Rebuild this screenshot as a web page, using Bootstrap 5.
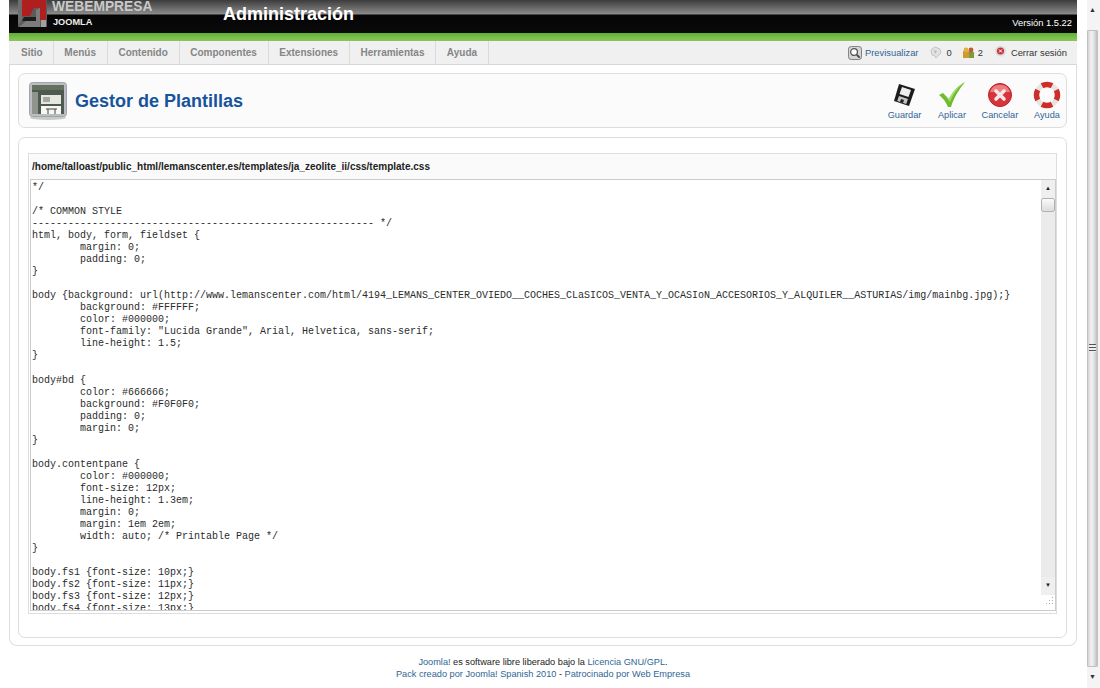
<!DOCTYPE html>
<html lang="es">
<head>
<meta charset="utf-8">
<title>Gestor de Plantillas</title>
<link href="https://cdn.jsdelivr.net/npm/bootstrap@5.3.0/dist/css/bootstrap.min.css" rel="stylesheet">
<style>
html,body{height:688px;overflow:hidden;margin:0;background:#fff}
body{font-family:"Liberation Sans",Arial,sans-serif;font-size:9.35px;color:#333}
a{text-decoration:none;color:#2f6596}
.page-shell{height:688px;padding-left:9px}
.page-col{width:1068px}
.win-bar{width:13px;margin-left:10px;background:#f4f4f4}
.win-arrow{height:21px;color:#333;font-size:7px;line-height:19px;text-align:center;padding-right:2px}
.win-gap{height:9px}
.win-thumb{height:642px;width:11px;background:linear-gradient(90deg,#d4d4d4,#f2f2f2 35%,#e4e4e4 65%,#bdbdbd);border:1px solid #c0c0c0;border-radius:1px}
.win-grip{width:7px;height:8px;background:repeating-linear-gradient(#555 0,#555 1px,#eee 1px,#eee 3px)}
.top-head{height:33px;background:linear-gradient(#3c3c3c 0,#8b8b8b 14px,#050505 15px,#0a0a0a 100%);color:#fff;overflow:hidden}
.brand-area{width:214px;padding-left:9px;height:33px}
.brand-name{font-size:13.8px;font-weight:700;color:#c9c9c9;line-height:14px;margin-left:4px}
.brand-sub{font-size:9.2px;font-weight:700;color:#eee;line-height:10px;margin-top:3px;margin-left:5px}
.head-title{font-size:18px;font-weight:700;line-height:29px}
.head-ver{font-size:9.35px;padding-right:5px;padding-top:16px}
.green-strip{height:8px;background:linear-gradient(#5fae35,#7cc04a 60%,#8ac45f)}
.menu-strip{height:24px;background:#f0f0f0;border-bottom:1px solid #d8d8d8;padding-right:10px}
.menu-item{font-size:10px;font-weight:700;color:#858585;padding:0 10.7px;line-height:23px;border-right:1px solid #dadada;height:23px}
.menu-item.first-item{padding:0 10px 0 12px}
.stat-item{font-size:9.35px;color:#333;line-height:22px}
.stat-link{margin-left:3px}
.stat-ic-a{margin-left:10px}
.stat-ic-b{margin-left:10px}
.stat-ic-c{margin-left:11px;margin-top:-3px}
.stat-num{margin-left:5px}
.stat-num-b{margin-left:3px}
.stat-gap{margin-left:4px}
.outer-frame{height:581px;border:1px solid #ddd;border-top:0;border-radius:0 0 8px 8px;padding:8px 9px 0 8px}
.tool-box{height:55px;background:#fbfbfb;border:1px solid #ddd;border-radius:7px;padding:2px 1px 0 10px}
.tool-thumb{margin-top:-2px}
.tool-title{font-size:18px;font-weight:700;color:#17549b;margin-left:8px;line-height:1;margin-top:-2px}
.tool-btn{width:36px;margin-left:11.5px;font-size:9.2px;color:#2f6596;line-height:12px;text-align:center;white-space:nowrap}
.tool-btn svg{display:block;margin:0 auto 1px;overflow:visible}
.inner-frame{height:501px;margin-top:9px;border:1px solid #ddd;border-radius:7px;padding:15px 9px 0 9px}
.file-box{height:461px;border:1px solid #ddd;padding:0 0 2px 1px}
.file-path{height:25px;background:#fafafa;font-size:10px;font-weight:700;color:#222;line-height:25px;padding-left:2px}
.code-box{height:432px;border:1px solid #ccc;background:#fff}
.code-text{flex:1;margin:0;padding:2px 0 0 1px;font-family:"Liberation Mono","Courier New",monospace;font-size:10px;line-height:12.03px;color:#2b2b2b;overflow:hidden;white-space:pre;tab-size:8}
.mini-bar{width:14px;background:#fff}
.mini-arrow{height:18px;background:#efefef;font-size:6px;color:#222;text-align:center;line-height:16px}
.mini-thumb{height:14px;background:linear-gradient(#fafafa,#dcdcdc);border:1px solid #b2b2b2;border-radius:2px}
.mini-track{flex:1;background:#ebebeb}
.mini-grip{height:15px;background:#fff;padding:2px 1px 0 3px}
.foot-text{font-size:9.2px;line-height:12px;text-align:center;padding-top:10px;color:#222}
</style>
</head>
<body>
<div class="d-flex page-shell">
  <div class="page-col">
    <header class="top-head d-flex">
      <div class="brand-area d-flex">
        <svg width="30" height="28" viewBox="0 0 30 28" class="flex-shrink-0"><rect width="29" height="27" fill="#5c5c5c"/><path d="M4 0h24v20h-6V8h-6l-4 8H4z" fill="#b01f1f"/><path d="M6 17h12v4H4z" fill="#1c1c1c"/><path d="M1 27l7-6h10V10l4-2v19z" fill="#7c7c7c"/><path d="M0 0h4v20l-4 5z" fill="#6e6e6e"/><rect x="23" y="20" width="5" height="7" fill="#a0a0a0"/></svg>
        <div><div class="brand-name">WEBEMPRESA</div><div class="brand-sub">JOOMLA</div></div>
      </div>
      <div class="head-title flex-grow-1">Administración</div>
      <div class="head-ver">Versión 1.5.22</div>
    </header>
    <div class="green-strip"></div>
    <nav class="menu-strip d-flex align-items-center">
      <span class="menu-item first-item">Sitio</span><span class="menu-item">Menús</span><span class="menu-item">Contenido</span><span class="menu-item">Componentes</span><span class="menu-item">Extensiones</span><span class="menu-item">Herramientas</span><span class="menu-item">Ayuda</span>
      <div class="ms-auto d-flex align-items-center stat-item">
        <svg width="14" height="14" viewBox="0 0 15 15"><rect x=".5" y=".5" width="14" height="14" rx="3" fill="#d5d5d5" stroke="#777"/><circle cx="6.500" cy="6.500" r="3.600" fill="#fff" stroke="#555" stroke-width="1.400"/><path d="M9.500 9.500l3 3" stroke="#444" stroke-width="2"/></svg>
        <a href="#" class="stat-link">Previsualizar</a>
        <svg width="13" height="13" viewBox="0 0 13 13" class="stat-ic-a"><path d="M2 4l4-3 5 2 1 4-3 3-2 2-1-2-3-1z" fill="#e2e2e2" stroke="#c4c4c4"/><path d="M5 4l3 1-2 3z" fill="#bbb"/></svg>
        <span class="stat-num">0</span>
        <svg width="13" height="12" viewBox="0 0 13 12" class="stat-ic-b"><rect x="1" y="4" width="6" height="7" fill="#cf9b2e"/><rect x="7" y="5" width="5" height="6" fill="#7d9b3a"/><circle cx="4" cy="3" r="2.400" fill="#e0b040"/><circle cx="9" cy="3" r="2.400" fill="#c05a30"/></svg>
        <span class="stat-num-b">2</span>
        <svg width="13" height="13" viewBox="0 0 13 13" class="stat-ic-c"><circle cx="6.500" cy="6" r="5.500" fill="#ddd"/><circle cx="6.500" cy="6" r="3.600" fill="#c9333a"/><path d="M5 4.500l3 3M8 4.500l-3 3" stroke="#fff"/></svg>
        <span class="stat-gap">Cerrar sesión</span>
      </div>
    </nav>
    <div class="outer-frame">
      <div class="tool-box d-flex align-items-center">
        <svg width="38" height="38" viewBox="0 0 38 38" class="flex-shrink-0 tool-thumb"><ellipse cx="19" cy="35.500" rx="18" ry="2.500" fill="#c9c9c9"/><rect x=".5" y=".5" width="37" height="34" rx="3" fill="#b9bec4" stroke="#a4a4a4"/><rect x="3" y="3" width="32" height="29" fill="#4e5a4f"/><rect x="3" y="3" width="32" height="5" fill="#65715f"/><rect x="3" y="10" width="6" height="22" fill="#8f958c"/><rect x="12" y="13" width="20" height="9" fill="#e7e7e2"/><rect x="14" y="15" width="7" height="5" fill="#a6a99f"/><rect x="12" y="24" width="20" height="8" fill="#f6f6f3"/><path d="M17 27h11M19 27v5M26 27v5" stroke="#444"/></svg>
        <h1 class="tool-title mb-0 flex-grow-1">Gestor de Plantillas</h1>
        <a href="#" class="tool-btn"><svg width="26" height="26" viewBox="0 0 26 26"><path d="M7 2l16 5-6 17L2 19z" fill="#1c1c1c"/><path d="M10 5l9 3-2.500 7-9-3z" fill="#eee"/><path d="M7 14l9 3-1.800 5-9-3z" fill="#c4c4c4"/><path d="M9 17l3 1-1 3-3-1z" fill="#222"/></svg>Guardar</a>
        <a href="#" class="tool-btn"><svg width="28" height="26" viewBox="0 0 28 26"><path d="M1 13l4-2 6 6C15 9 20 4 27 0c-5 6-11 15-14 25h-3C8 20 5 16 1 13z" fill="#6fbb2e"/><path d="M5 11l6 6C15 9 20 4 27 0c-7 5-12 12-15 20z" fill="#a7db6c"/></svg>Aplicar</a>
        <a href="#" class="tool-btn"><svg width="26" height="26" viewBox="0 0 26 26"><circle cx="13" cy="13" r="11.500" fill="#d9343c" stroke="#b3262d"/><path d="M3 10a10.500 10.500 0 0 1 20 0z" fill="#ee7d80"/><path d="M9 9l8 8M17 9l-8 8" stroke="#f3e8e8" stroke-width="3.600" stroke-linecap="round"/></svg>Cancelar</a>
        <a href="#" class="tool-btn"><svg width="26" height="26" viewBox="0 0 26 26"><circle cx="13" cy="13" r="10.500" fill="none" stroke="#e8e2e0" stroke-width="5"/><circle cx="13" cy="13" r="10.500" fill="none" stroke="#cd2e2a" stroke-width="5.500" stroke-dasharray="10 5.700" stroke-dashoffset="5" pathLength="62.800"/></svg>Ayuda</a>
      </div>
      <div class="inner-frame">
        <div class="file-box">
          <div class="file-path">/home/talloast/public_html/lemanscenter.es/templates/ja_zeolite_ii/css/template.css</div>
          <div class="code-box d-flex overflow-hidden">
<pre class="code-text">*/

/* COMMON STYLE
--------------------------------------------------------- */
html, body, form, fieldset {
	margin: 0;
	padding: 0;
}

body {background: url(http://www.lemanscenter.com/html/4194_LEMANS_CENTER_OVIEDO__COCHES_CLaSICOS_VENTA_Y_OCASIoN_ACCESORIOS_Y_ALQUILER__ASTURIAS/img/mainbg.jpg);}
	background: #FFFFFF;
	color: #000000;
	font-family: "Lucida Grande", Arial, Helvetica, sans-serif;
	line-height: 1.5;
}

body#bd {
	color: #666666;
	background: #F0F0F0;
	padding: 0;
	margin: 0;
}

body.contentpane {
	color: #000000;
	font-size: 12px;
	line-height: 1.3em;
	margin: 0;
	margin: 1em 2em;
	width: auto; /* Printable Page */
}

body.fs1 {font-size: 10px;}
body.fs2 {font-size: 11px;}
body.fs3 {font-size: 12px;}
body.fs4 {font-size: 13px;}
</pre>
            <div class="mini-bar d-flex flex-column flex-shrink-0">
              <div class="mini-arrow">▲</div>
              <div class="mini-thumb"></div>
              <div class="mini-track"></div>
              <div class="mini-arrow">▼</div>
              <div class="mini-grip"><svg width="10" height="10" viewBox="0 0 10 10" class="d-block"><path d="M8 0h1v1H8zM5 3h1v1H5zM8 3h1v1H8zM2 6h1v1H2zM5 6h1v1H5zM8 6h1v1H8z" fill="#aaa"/></svg></div>
            </div>
          </div>
        </div>
      </div>
    </div>
    <footer class="foot-text">
      <div><a href="#">Joomla!</a> es software libre liberado bajo la <a href="#">Licencia GNU/GPL</a>.</div>
      <div><a href="#">Pack creado por Joomla! Spanish 2010</a> - <a href="#">Patrocinado por Web Empresa</a></div>
    </footer>
  </div>
  <aside class="win-bar d-flex flex-column flex-shrink-0">
    <div class="win-arrow">▲</div>
    <div class="win-gap"></div>
    <div class="win-thumb d-flex align-items-center justify-content-center"><div class="win-grip"></div></div>
    <div class="flex-grow-1"></div>
    <div class="win-arrow">▼</div>
  </aside>
</div>
<script src="https://cdn.jsdelivr.net/npm/bootstrap@5.3.0/dist/js/bootstrap.bundle.min.js"></script>
</body>
</html>
